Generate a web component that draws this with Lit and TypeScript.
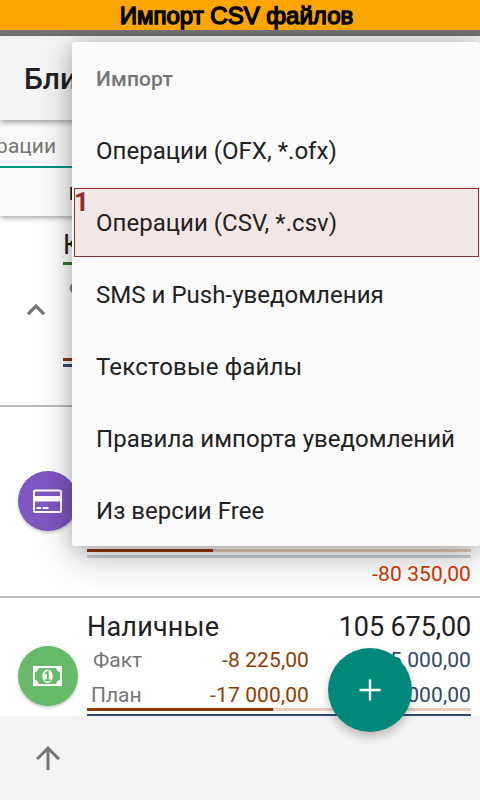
import { LitElement, html, css, svg } from "lit";
import { customElement } from "lit/decorators.js";
import { styleMap } from "lit/directives/style-map.js";

const cardIcon = svg`<svg width="60" height="60" viewBox="0 0 60 60" fill="none">
  <rect x="16" y="19.500" width="27" height="21.500" rx="1.500" stroke="#fff" stroke-width="2"/>
  <path d="M16 25h27v5.500H16zM18.500 36h4.500v2h-4.500zM24.500 36h6v2h-6z" fill="#fff"/></svg>`;

const cashIcon = svg`<svg width="60" height="60" viewBox="0 0 60 60">
  <path fill="#fff" fill-rule="evenodd" d="M15 20h29v20H15zM20.500 22a3.500 3.500 0 0 1-3.500 4v8a3.500 3.500 0 0 1 3.500 4h18a3.500 3.500 0 0 1 3.500-4v-8a3.500 3.500 0 0 1-3.500-4z"/>
  <ellipse cx="29.500" cy="30.200" rx="5.200" ry="6.700" fill="#fff"/>
  <path d="M27 27.800l2.800-1.800v8M26.800 34.200h5.800" fill="none" stroke="#66bb6a" stroke-width="1.900"/></svg>`;

const ENTRIES = [
  "Операции (OFX, *.ofx)",
  "Операции (CSV, *.csv)",
  "SMS и Push-уведомления",
  "Текстовые файлы",
  "Правила импорта уведомлений",
  "Из версии Free",
];

@customElement("app-root")
export class AppRoot extends LitElement {
  static styles = css`
    :host {
      display: block;
      position: relative;
      width: 480px;
      height: 800px;
      overflow: hidden;
      background: #fff;
      color: #212121;
      font-family: Roboto, "Noto Sans", sans-serif;
      white-space: nowrap;
    }
    * { box-sizing: border-box; }
    svg { display: block; }
    .screen { display: flex; flex-direction: column; height: 800px; }
    .banner {
      position: relative;
      z-index: 5;
      flex: none;
      height: 30px;
      line-height: 32px;
      text-align: center;
      background: #ffa500;
      color: #000;
      font-family: "Liberation Sans", Arial, sans-serif;
      font-size: 24px;
      padding-right: 7px;
      -webkit-text-stroke: 1.4px #000;
    }
    .status { flex: none; height: 6px; background: #757575; }
    .bar {
      flex: none;
      height: 84px;
      padding-left: 24px;
      line-height: 86px;
      background: #f4f4f4;
      font-size: 30px;
      font-weight: 500;
      box-shadow: 0 2px 6px rgba(0, 0, 0, 0.4);
      z-index: 1;
    }
    .filters {
      flex: none;
      height: 96px;
      background: #fafafa;
      box-shadow: 0 2px 5px rgba(0, 0, 0, 0.35);
    }
    .tab {
      height: 48px;
      line-height: 52px;
      border-bottom: 2px solid #009688;
      color: #757575;
      font-size: 21px;
      display: flex;
      justify-content: flex-end;
      width: 480px;
      padding-right: 424px;
    }
    .period { height: 48px; padding-left: 69px; line-height: 51px; font-size: 18px; font-weight: 500; }
    .item { display: flex; flex: none; border-bottom: 2px solid #bababa; padding-right: 9px; }
    .group { height: 191px; }
    .card { height: 191px; }
    .cash { height: 118px; border-bottom: 0; overflow: hidden; }
    .side { width: 87px; flex: none; display: flex; padding-left: 18px; }
    .group .side { width: 63px; padding-top: 76px; }
    .card .side { padding-top: 64px; }
    .cash .side { padding-top: 48px; }
    .disc { width: 60px; height: 60px; border-radius: 50%; box-shadow: 0 2px 3px rgba(0, 0, 0, 0.2); }
    .violet { background: #7e57c2; }
    .green { background: #66bb6a; }
    .body { flex: 1; display: flex; flex-direction: column; min-width: 0; }
    .line { display: flex; justify-content: space-between; flex: none; }
    .name { font-size: 27px; height: 46px; line-height: 58px; }
    .name .title { letter-spacing: 0.2px; }
    .name .total { letter-spacing: -0.12px; }
    .mark { height: 3px; background: #2e7d32; flex: none; }
    .sub { font-size: 21px; line-height: 33px; height: 35px; color: #757575; }
    .sub .label { width: 60px; padding-left: 6px; }
    .sub .plan { padding-left: 4px; }
    .sub .out { width: 162px; text-align: right; color: #933c00; letter-spacing: 0.12px; }
    .sub .in { width: 162px; text-align: right; color: #2f4867; letter-spacing: 0.12px; }
    .cash .last { height: 29px; }
    .meter { height: 3px; flex: none; margin-bottom: 3px; background: #e8cdbf; }
    .fill { height: 3px; background: #913600; }
    .blue { background: #314c70; }
    .pale { background: #c9d2dc; }
    .gap { height: 26px; }
    .balance { font-size: 21px; line-height: 27px; text-align: right; color: #d23600; letter-spacing: 0.12px; }
    .group .sub { padding-top: 7px; height: 93px; }
    .foot { flex: 1; background: #f4f4f4; padding: 24px 30px; z-index: 1; }
    .menu {
      position: absolute;
      left: 72px;
      top: 42px;
      width: 408px;
      height: 504px;
      border-radius: 3px;
      background: #fafafa;
      box-shadow: 0 12px 36px rgba(0, 0, 0, 0.26), 0 0 18px rgba(0, 0, 0, 0.16);
      z-index: 3;
    }
    .menu div { height: 72px; line-height: 74px; padding-left: 24px; font-size: 24px; letter-spacing: 0.03px; }
    .menu .wide { letter-spacing: 0.17px; }
    .menu .head { font-size: 21px; font-weight: 500; color: #757575; letter-spacing: 0.15px; }
    .frame {
      position: absolute;
      z-index: 4;
      left: 74px;
      top: 188px;
      width: 405px;
      height: 69px;
      border: 1px solid #922d2d;
      background: rgba(120, 20, 16, 0.08);
      color: #922d2d;
      font: bold 26px/26px Roboto, sans-serif;
      text-indent: -1px;
    }
    .fab {
      position: absolute;
      z-index: 4;
      left: 328px;
      top: 648px;
      width: 84px;
      height: 84px;
      padding: 24px;
      border-radius: 50%;
      background: #00897b;
      box-shadow: 0 5px 10px rgba(0, 0, 0, 0.24);
    }
  `;

  private meter(ratio: number) {
    return html`<div class="meter"><div class="fill" style=${styleMap({ width: `${ratio * 100}%` })}></div></div>`;
  }

  render() {
    return html`
      <div class="screen">
        <div class="banner">Импорт CSV файлов</div>
        <div class="status"></div>
        <div class="bar">Бли</div>
        <div class="filters">
          <div class="tab"><span>рации</span></div>
          <div class="period">Н</div>
        </div>
        <div class="item group">
          <div class="side">
            <svg width="36" height="36" viewBox="0 0 24 24"><path fill="#757575" stroke="#757575" stroke-width=".3" d="M12 8l-6 6 1.410 1.410L12 10.830l4.590 4.580L18 14z"/></svg>
          </div>
          <div class="body">
            <div class="name">К</div>
            <div class="mark"></div>
            <div class="line sub"><span class="label">Ф</span></div>
            <div class="meter fill"></div>
            <div class="meter blue"></div>
          </div>
        </div>
        <div class="item card">
          <div class="side"><div class="disc violet">${cardIcon}</div></div>
          <div class="body">
            <div class="name"></div>
            <div class="sub"></div>
            <div class="sub"></div>
            <div class="gap"></div>
            ${this.meter(0.328)}
            <div class="meter pale"></div>
            <div class="balance">-80 350,00</div>
          </div>
        </div>
        <div class="item cash">
          <div class="side"><div class="disc green">${cashIcon}</div></div>
          <div class="body">
            <div class="line name"><span class="title">Наличные</span><span class="total">105 675,00</span></div>
            <div class="line sub"><span class="label">Факт</span><span class="out">-8 225,00</span><span class="in">5 000,00</span></div>
            <div class="line sub last"><span class="label plan">План</span><span class="out">-17 000,00</span><span class="in">5 000,00</span></div>
            ${this.meter(0.485)}
            <div class="meter blue"></div>
          </div>
        </div>
        <div class="foot">
          <svg width="36" height="36" viewBox="0 0 24 24"><path fill="#757575" d="M4 12l1.410 1.410L11 7.830V20h2V7.830l5.580 5.590L20 12l-8-8z"/></svg>
        </div>
      </div>
      <div class="menu">
        <div class="head">Импорт</div>
        ${ENTRIES.map((e) => html`<div class=${e.startsWith("Т") ? "wide" : ""}>${e}</div>`)}
      </div>
      <div class="frame">1</div>
      <div class="fab">
        <svg width="36" height="36" viewBox="0 0 24 24"><path fill="#fff" d="M19 12.800h-6.200V19h-1.600v-6.200H5v-1.600h6.200V5h1.600v6.200H19z"/></svg>
      </div>
    `;
  }
}
